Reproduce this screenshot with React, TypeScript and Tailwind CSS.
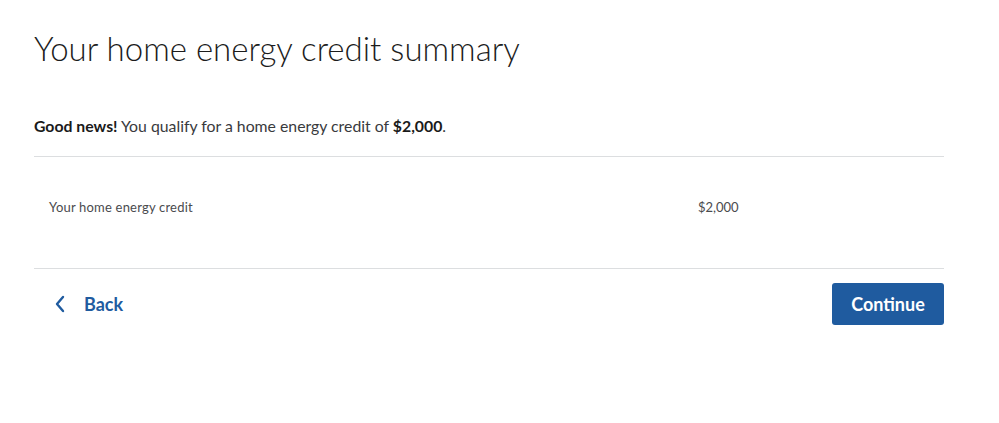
import React from 'react';

const App: React.FC = () => {
  return (
    <div className="w-[999px] h-[423px] bg-white text-[#1a1a1a]" style={{ fontFamily: 'Lato, "Open Sans", sans-serif' }}>
      <div className="ml-[34px] w-[910px] pt-[26px]">
        <h1 className="text-[33px] leading-[44px] font-light text-[#1c1c1c]">
          Your home energy credit summary
        </h1>

        <p className="mt-[45px] text-[15.8px] leading-[22px] text-[#393a3d]">
          <span className="font-bold text-[#1a1a1a]">Good news!</span> You qualify for a home energy credit of{' '}
          <span className="font-bold text-[#1a1a1a]">$2,000</span>.
        </p>

        <div className="mt-[19px] border-t border-[#dcdee0]" />

        <div className="flex h-[111px] pt-[41px] pl-[15px] text-[13px] leading-[18px] text-[#4a4b4e]">
          <div className="w-[649px] tracking-[0.2px]">Your home energy credit</div>
          <div>$2,000</div>
        </div>

        <div className="border-t border-[#dcdee0]" />

        <div className="flex items-center justify-between mt-[14px]">
          <button className="flex items-center gap-[18px] pl-[20px] h-[42px] text-[#1f5b9f] text-[18px] font-bold">
            <svg width="12" height="18" viewBox="0 0 12 18" fill="none">
              <path d="M9 2 L3 9 L9 16" stroke="#1f5b9f" strokeWidth="2.4" strokeLinecap="round" strokeLinejoin="round" />
            </svg>
            Back
          </button>
          <button className="w-[112px] h-[42px] rounded-[3px] bg-[#1f5b9f] text-white text-[18px] font-bold">
            Continue
          </button>
        </div>
      </div>
    </div>
  );
};

export default App;
